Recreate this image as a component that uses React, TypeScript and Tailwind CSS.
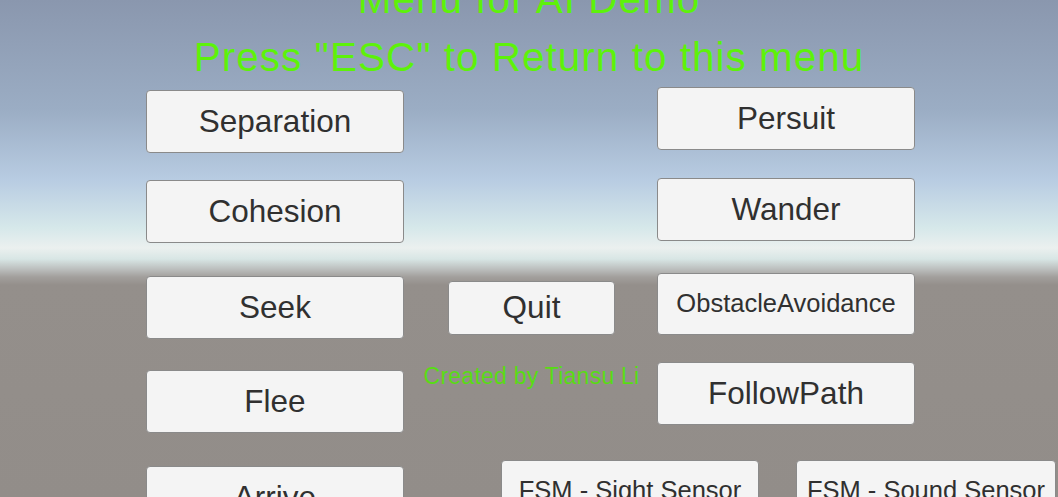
import React from 'react';

// Unity-style demo menu: sky/ground backdrop with a grid of GUI buttons.

type MenuButtonProps = {
  label: string;
  className?: string;
  small?: boolean;
};

const MenuButton: React.FC<MenuButtonProps> = ({ label, className = '', small }) => (
  <button
    className={`flex items-center justify-center rounded-[4px] border border-[#8a8a8a] bg-[#f4f4f4] text-[#303030] whitespace-nowrap leading-none ${
      small ? 'text-[25.5px]' : 'text-[31.5px]'
    } ${className}`}
  >
    {label}
  </button>
);

export default function App() {
  return (
    <div
      className="w-[1058px] h-[497px] overflow-hidden font-['Liberation_Sans',Arial,sans-serif] bg-[linear-gradient(to_bottom,#8a97ae_0px,#9badc4_110px,#b8cce2_180px,#d6e8ea_228px,#ebf0ef_248px,#d8e6e5_259px,#bcbfbe_269px,#a29f9c_277px,#948f8b_285px,#928d89_497px)]"
    >
      {/* Title */}
      <div className="flex flex-col items-center mt-[-21px] text-[40.5px] leading-none tracking-[1px] text-[#5df20a] whitespace-nowrap">
        <div className="h-[40px]">Menu for AI Demo</div>
        <div className="h-[40px] mt-[18px]">Press "ESC" to Return to this menu</div>
      </div>

      {/* Buttons */}
      <div className="flex mt-[10px] pl-[146px]">
        {/* Left column */}
        <div className="flex flex-col w-[258px] shrink-0 pt-[3px]">
          <MenuButton label="Separation" className="h-[63px]" />
          <MenuButton label="Cohesion" className="h-[63px] mt-[27px]" />
          <MenuButton label="Seek" className="h-[63px] mt-[33px]" />
          <MenuButton label="Flee" className="h-[63px] mt-[31px]" />
          <MenuButton label="Arrive" className="h-[63px] mt-[33px]" />
        </div>

        <div className="flex flex-col">
          <div className="flex">
            {/* Middle column */}
            <div className="flex flex-col items-center w-[167px] ml-[44px] shrink-0">
              <MenuButton label="Quit" className="w-[167px] h-[54px] mt-[194px]" />
              <div className="mt-[30px] text-[23px] leading-none tracking-[0.25px] text-[#58dc14] whitespace-nowrap">
                Created by Tiansu Li
              </div>
            </div>

            {/* Right column */}
            <div className="flex flex-col w-[258px] ml-[42px] shrink-0">
              <MenuButton label="Persuit" className="h-[63px]" />
              <MenuButton label="Wander" className="h-[63px] mt-[28px]" />
              <MenuButton label="ObstacleAvoidance" small className="h-[62px] mt-[32px]" />
              <MenuButton label="FollowPath" className="h-[63px] mt-[27px]" />
            </div>
          </div>

          {/* FSM row */}
          <div className="flex mt-[35px] ml-[97px] gap-[37px]">
            <MenuButton label="FSM - Sight Sensor" small className="w-[258px] h-[62px] shrink-0" />
            <MenuButton label="FSM - Sound Sensor" small className="w-[260px] h-[62px] shrink-0" />
          </div>
        </div>
      </div>
    </div>
  );
}
